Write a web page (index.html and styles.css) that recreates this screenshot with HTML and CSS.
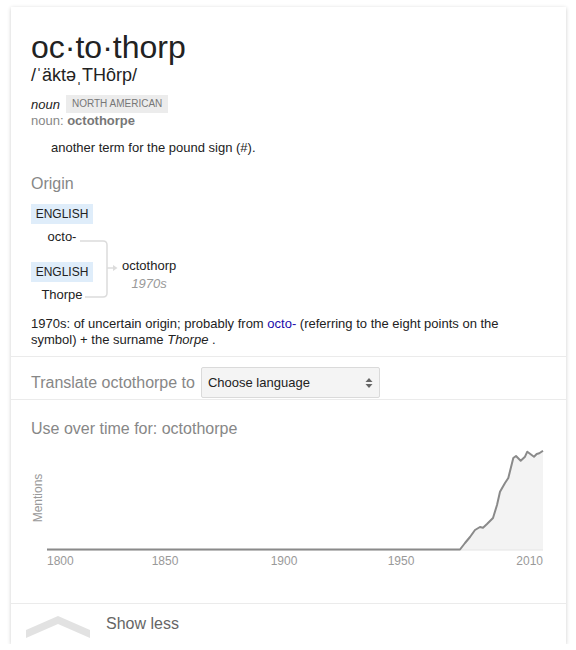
FILE: index.html
```html
<!DOCTYPE html>
<html lang="en">
<head>
<meta charset="utf-8">
<title>octothorp</title>
<link rel="stylesheet" href="styles.css">
</head>
<body>
<div class="card">
  <section class="sec sec-def">
    <div class="title">oc·to·thorp</div>
    <div class="phon">/ˈäktəˌTHôrp/</div>
    <div class="pos-row">
      <span class="pos">noun</span>
      <span class="region">NORTH AMERICAN</span>
    </div>
    <div class="variant">noun: <b>octothorpe</b></div>
    <div class="gloss">another term for the pound sign (#).</div>

    <div class="sub-head">Origin</div>
    <div class="diagram">
      <svg class="connector" width="100" height="100" viewBox="0 0 100 100">
        <path d="M49 37 H72 Q76 37 76 41 V89 Q76 93 72 93 H54" fill="none" stroke="#dcdcdc" stroke-width="1.5"/>
        <path d="M76 64 H82" fill="none" stroke="#dcdcdc" stroke-width="1.5"/>
        <polygon points="82,61 86.5,64 82,67" fill="#dcdcdc"/>
      </svg>
      <div class="roots">
        <span class="lang">ENGLISH</span>
        <span class="word">octo-</span>
        <span class="lang lang-2">ENGLISH</span>
        <span class="word">Thorpe</span>
      </div>
      <div class="result">
        <span class="word">octothorp</span>
        <span class="date">1970s</span>
      </div>
    </div>
    <p class="etym">1970s: of uncertain origin; probably from <a class="link">octo-</a> (referring to the eight points on the symbol) + the surname <i>Thorpe</i> .</p>
  </section>

  <section class="sec sec-translate">
    <span class="sub-head inline">Translate octothorpe to</span>
    <div class="select">
      <span>Choose language</span>
      <svg width="8" height="12" viewBox="0 0 8 12"><polygon points="0.5,5 4,1 7.5,5" fill="#666"/><polygon points="0.5,7 4,11 7.5,7" fill="#666"/></svg>
    </div>
  </section>

  <section class="sec sec-chart">
    <div class="sub-head">Use over time for: octothorpe</div>
    <svg class="chart" width="515" height="130" viewBox="0 0 515 130">
      <text class="axis-title" transform="translate(11 58) rotate(-90)" text-anchor="middle">Mentions</text>
      <polygon fill="#f3f3f3" points="429,110 429,109 434,103 439,97 444,90 449,87 452,87.7 456,84 462,78 466,65 469,51.7 474,43 477.3,38 482.3,18 485,16 489.7,20.7 494,16.7 496.3,11.7 503,16.7 505.7,14 508.3,13.3 512,10.7 512,110"/>
      <line x1="16" y1="110" x2="512" y2="110" stroke="#e4e4e4" stroke-width="1"/>
      <polyline fill="none" stroke="#8a8a8a" stroke-width="2" stroke-linejoin="round" points="16,109.5 429,109.5 434,103 439,97 444,90 449,87 452,87.7 456,84 462,78 466,65 469,51.7 474,43 477.3,38 482.3,18 485,16 489.7,20.7 494,16.7 496.3,11.7 503,16.7 505.7,14 508.3,13.3 512,10.7"/>
      <text class="tick" x="16" y="125" text-anchor="start">1800</text>
      <text class="tick" x="134" y="125" text-anchor="middle">1850</text>
      <text class="tick" x="253" y="125" text-anchor="middle">1900</text>
      <text class="tick" x="370" y="125" text-anchor="middle">1950</text>
      <text class="tick" x="512" y="125" text-anchor="end">2010</text>
    </svg>
  </section>

  <section class="sec sec-less">
    <svg class="chev" width="66" height="26" viewBox="0 0 66 26"><polygon points="1,16 33,2 65,16 65,24 33,10 1,24" fill="#e2e2e2"/></svg>
    <span class="less">Show less</span>
  </section>
</div>
</body>
</html>
```

FILE: styles.css
```css
html, body {
  margin: 0;
  padding: 0;
  background: #fff;
}
body {
  font-family: "Liberation Sans", Arial, sans-serif;
  color: #222;
}
.card {
  margin: 7px 10px 0 11px;
  width: 555px;
  background: #fff;
  box-shadow: 0 1px 4px rgba(0, 0, 0, 0.2);
}
.sec {
  border-top: 1px solid #ebebeb;
}
.sec-def {
  border-top: 0;
  padding: 23px 20px 8px 20px;
}
.title {
  font-size: 32px;
  line-height: 34px;
  color: #222;
}
.phon {
  font-size: 18px;
  line-height: 22px;
}
.pos-row {
  display: flex;
  align-items: center;
  margin-top: 9px;
  height: 18px;
}
.pos {
  font-style: italic;
  font-size: 13px;
  margin-right: 6px;
}
.region {
  background: #ececec;
  color: #777;
  font-size: 10px;
  line-height: 18px;
  padding: 0 6px;
}
.variant {
  font-size: 13px;
  line-height: 16px;
  color: #878787;
}
.variant b {
  color: #777;
}
.gloss {
  font-size: 13px;
  line-height: 16px;
  margin-top: 11px;
  padding-left: 20px;
}
.sub-head {
  font-size: 16px;
  line-height: 20px;
  color: #878787;
}
.sec-def .sub-head {
  margin-top: 18px;
}
.diagram {
  position: relative;
  display: flex;
  align-items: flex-start;
  margin-top: 10px;
  font-size: 13px;
}
.connector {
  position: absolute;
  left: 0;
  top: 0;
}
.roots {
  display: flex;
  flex-direction: column;
  align-items: center;
  width: 62px;
}
.lang {
  display: block;
  background: #dfedfa;
  font-size: 12px;
  line-height: 20px;
  width: 62px;
  text-align: center;
  color: #222;
}
.lang-2 {
  margin-top: 16px;
}
.word {
  display: block;
  line-height: 18px;
  margin-top: 4px;
}
.result {
  display: flex;
  flex-direction: column;
  align-items: center;
  margin-left: 29px;
  margin-top: 49px;
}
.date {
  font-style: italic;
  color: #999;
  line-height: 18px;
}
.etym {
  margin: 12px 0 0;
  font-size: 13px;
  line-height: 16px;
}
.link {
  color: #1a0dab;
}
.sec-translate {
  display: flex;
  align-items: center;
  padding: 10px 20px 1px 20px;
}
.inline {
  margin-right: 6px;
}
.select {
  box-sizing: border-box;
  width: 179px;
  height: 31px;
  border: 1px solid #dadada;
  border-radius: 2px;
  background: #f4f4f4;
  display: flex;
  align-items: center;
  justify-content: space-between;
  padding: 0 6px 0 6px;
  font-size: 13px;
  color: #222;
}
.sec-chart {
  padding: 19px 20px 33px 20px;
}
.chart {
  display: block;
  margin-top: 1px;
}
.axis-title {
  font-family: "Liberation Sans", Arial, sans-serif;
  font-size: 12px;
  fill: #999;
}
.tick {
  font-family: "Liberation Sans", Arial, sans-serif;
  font-size: 12px;
  fill: #999;
}
.sec-less {
  display: flex;
  align-items: center;
  height: 40px;
  padding-left: 14px;
}
.chev {
  display: block;
  margin-top: 6px;
}
.less {
  font-size: 16px;
  color: #666;
  margin-left: 15px;
}
```
